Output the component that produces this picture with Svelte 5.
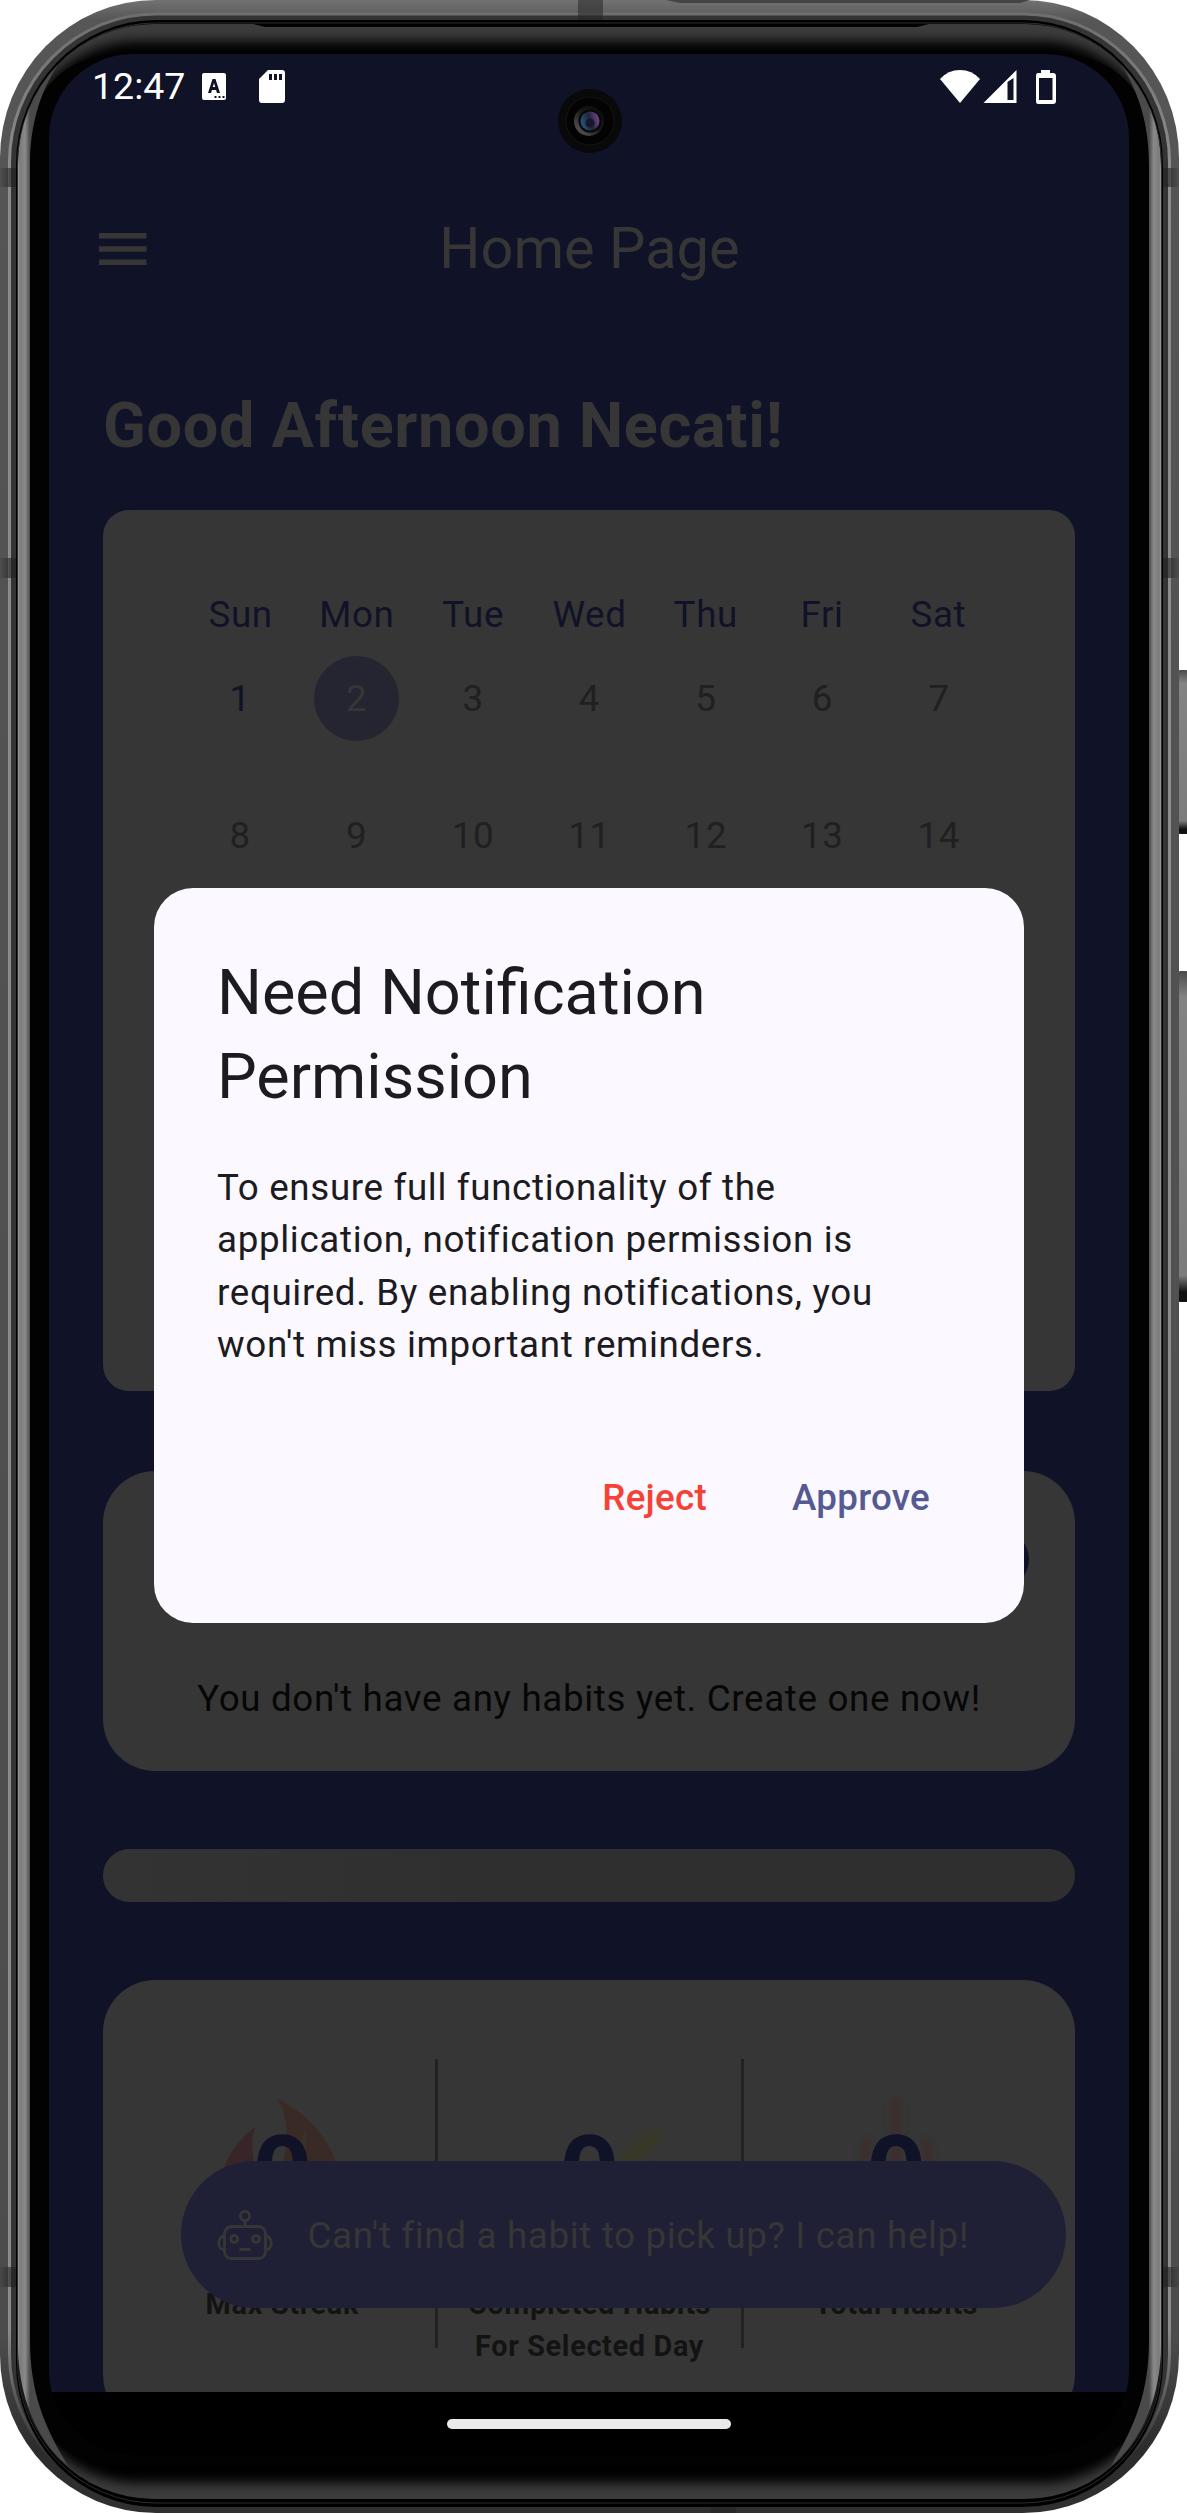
<script>
  const weekdays = ['Sun', 'Mon', 'Tue', 'Wed', 'Thu', 'Fri', 'Sat'];
  const days = Array.from({ length: 14 }, (_, i) => i + 1);
  const today = 1;
  const selected = 2;
  const stats = [
    { label: 'Max Streak', value: 0, art: 'flame' },
    { label: 'Completed Habits For Selected Day', value: 0, art: 'check' },
    { label: 'Total Habits', value: 0, art: 'tally' }
  ];
</script>

<div class="device">
  <svg class="frame" viewBox="0 0 1187 2513" aria-hidden="true">
    <defs>
      <linearGradient id="shell" x1="0" y1="0" x2="0" y2="1">
        <stop offset="0" stop-color="#727272" />
        <stop offset="0.008" stop-color="#565656" />
        <stop offset="0.05" stop-color="#555" />
        <stop offset="0.93" stop-color="#4c4c4c" />
        <stop offset="0.975" stop-color="#2c2c2c" />
        <stop offset="1" stop-color="#303030" />
      </linearGradient>
      <linearGradient id="rim" x1="0" y1="0" x2="0" y2="1">
        <stop offset="0" stop-color="#6e6e6e" />
        <stop offset="0.06" stop-color="#8c8c8c" />
        <stop offset="0.93" stop-color="#8c8c8c" />
        <stop offset="0.975" stop-color="#3c3c3c" />
        <stop offset="1" stop-color="#1c1c1c" />
      </linearGradient>
      <linearGradient id="bandL" x1="18" x2="30" y1="0" y2="0" gradientUnits="userSpaceOnUse">
        <stop offset="0" stop-color="#9a9a9a" />
        <stop offset="0.15" stop-color="#7a7a7a" />
        <stop offset="0.6" stop-color="#8a8a8a" />
        <stop offset="1" stop-color="#4a4a4a" />
      </linearGradient>
      <linearGradient id="key" x1="0" x2="0" y1="0" y2="1">
        <stop offset="0" stop-color="#4a4a4a" />
        <stop offset="0.08" stop-color="#838383" />
        <stop offset="0.92" stop-color="#7c7c7c" />
        <stop offset="0.97" stop-color="#111" />
      </linearGradient>
      <linearGradient id="markL" x1="0" x2="1" y1="0" y2="0">
        <stop offset="0" stop-color="#222" stop-opacity="0.1" /><stop offset="0.6" stop-color="#222" stop-opacity="0.6" /><stop offset="1" stop-color="#222" stop-opacity="0.7" />
      </linearGradient>
      <linearGradient id="markR" x1="1" x2="0" y1="0" y2="0">
        <stop offset="0" stop-color="#222" stop-opacity="0.1" /><stop offset="0.6" stop-color="#222" stop-opacity="0.6" /><stop offset="1" stop-color="#222" stop-opacity="0.7" />
      </linearGradient>
      <filter id="soft" x="-5%" y="-5%" width="110%" height="110%"><feGaussianBlur stdDeviation="6" /></filter>
      <clipPath id="inner"><rect x="18" y="24" width="1143" height="2475" rx="136" ry="140" /></clipPath>
    </defs>
    <rect x="1178" y="670" width="10" height="164" rx="2" fill="url(#key)" />
    <rect x="1178" y="971" width="10" height="331" rx="2" fill="url(#key)" />
    <rect width="1179" height="2513" rx="156" ry="158" fill="url(#shell)" />
    <path d="M666 0H1030L1020 3H680Z" fill="#444" />
    <rect x="9.5" y="14" width="1160" height="2488" rx="146" ry="148" fill="#343434" stroke="url(#rim)" stroke-width="3" />
    <g fill="url(#markL)">
      <rect y="168" width="16" height="19" /><rect y="558" width="16" height="20" /><rect y="2267" width="16" height="20" />
    </g>
    <g fill="url(#markR)">
      <rect x="1163" y="168" width="16" height="19" /><rect x="1163" y="558" width="16" height="20" /><rect x="1163" y="2267" width="16" height="20" />
    </g>
    <g fill="#222" opacity="0.5">
      <rect x="578" width="25" height="20" /><rect x="711" y="2504" width="25" height="9" />
    </g>
    <rect x="16" y="20" width="1147" height="2487" rx="140" ry="144" fill="#000" />
    <rect x="17.5" y="23" width="1144" height="2480" rx="138" ry="142" fill="none" stroke="#2c2c2c" />
    <g clip-path="url(#inner)">
      <rect x="18" y="24" width="1143" height="2475" fill="#3c3c3c" />
      <rect x="18" y="41" width="1143" height="2442" rx="120" fill="#020202" filter="url(#soft)" />
      <rect x="29" y="55" width="1121" height="2410" rx="85" fill="#020202" />
      <path d="M245 22L265 27H917L937 22Z" fill="#000" />
      <path d="M64 56C34 84 18 120 18 168V2345C18 2395 36 2440 68 2466C44 2426 30 2392 30 2340V165C30 125 40 88 64 56Z" fill="url(#bandL)" />
      <path d="M64 56C34 84 18 120 18 168V2345C18 2395 36 2440 68 2466C44 2426 30 2392 30 2340V165C30 125 40 88 64 56Z" transform="translate(1179 0) scale(-1 1)" fill="url(#bandL)" />
    </g>
  </svg>

  <main class="screen">
    <header class="status">
      <time>12:47</time>
      <svg class="ime" viewBox="0 0 24 27"><path fill="#fff" fill-rule="evenodd" d="M2 0H22Q24 0 24 2V25Q24 27 22 27H2Q0 27 0 25V2Q0 0 2 0ZM6 20H9L10 17H14L15 20H18L13.500 6H10.500ZM10.800 14L12 10L13.200 14ZM12.500 23V25H14.500V23ZM16.500 23V25H18.500V23ZM20.500 23V25H22.500V23Z" /></svg>
      <svg class="sd" viewBox="0 0 26 33"><path fill="#fff" fill-rule="evenodd" d="M9 0H23Q26 0 26 3V30Q26 33 23 33H3Q0 33 0 30V9ZM10 4V10H13V4ZM15 4V10H18V4ZM20 4V10H23V4Z" /></svg>
      <svg class="signals" viewBox="0 0 116 34">
        <g fill="#fff">
          <path d="M0 9Q8 0 20 0T40 9L20 33Z" />
          <path fill-rule="evenodd" d="M43.500 33L76.500 0V33ZM67.500 12V30H73.500V8Z" />
          <path fill-rule="evenodd" d="M101 0H110V3H113Q116 3 116 6V31Q116 34 113 34H98Q96 34 96 31V6Q96 3 98 3H101ZM99 8V30H112.500V8Z" />
        </g>
      </svg>
    </header>

    <div class="app">
      <nav class="appbar">
        <svg class="menu" viewBox="0 0 48 32"><path fill="#363636" d="M0 0H47.500V5.500H0ZM0 13.200H47.500V18.700H0ZM0 26.400H47.500V31.900H0Z" /></svg>
        <h1>Home Page</h1>
      </nav>

      <h2>Good Afternoon Necati!</h2>

      <section class="card calendar">
        <div class="week names">
          {#each weekdays as name}<span>{name}</span>{/each}
        </div>
        <div class="week">
          {#each days as day}
            <span class="day" class:today={day === today} class:selected={day === selected}><b>{day}</b></span>
          {/each}
        </div>
      </section>

      <section class="card habits">
        <div class="add"><i></i></div>
        <p>You don't have any habits yet. Create one now!</p>
      </section>

      <div class="shimmer"></div>

      <section class="card stats">
        {#each stats as stat}
          <article>
            <svg class="art" viewBox="0 0 160 130" aria-hidden="true">
              {#if stat.art === 'flame'}
                <path fill="#392527" d="M54 29C36 43 23 60 19 88L62 90C54 72 47 50 54 29Z" />
                <path fill="#3a2a26" d="M76 1C104 14 128 37 140 78L130 110H60C62 84 84 72 85 50C87 30 85 14 76 1Z" />
                <path fill="#38332a" d="M104 30C103 42 92 50 92 64L102 62C105 50 107 42 104 30Z" />
              {:else if stat.art === 'check'}
                <path class="haze" stroke="#393926" stroke-width="13" fill="none" d="M70 66L92 84L150 36" />
              {:else}
                <path class="haze2" stroke="#3d2d2c" stroke-width="9" d="M80 0V100M50 42V100M111 42V100" />
              {/if}
            </svg>
            <strong>{stat.value}</strong>
            <span class="label">{stat.label}</span>
          </article>
        {/each}
      </section>

      <div class="helper">
        <svg viewBox="0 0 56 50" fill="none" stroke="#363636" stroke-width="2.900">
          <circle cx="28" cy="6" r="4.600" />
          <path d="M28 11V16M22.500 39.500H33.500" />
          <rect x="7.500" y="16.500" width="41" height="32" rx="7" />
          <circle cx="17.200" cy="29" r="3.500" /><circle cx="39" cy="29" r="3.500" />
          <path d="M7 26C0 27 0 39 7 40M49 26C56 27 56 39 49 40" />
        </svg>
        <span>Can't find a habit to pick up? I can help!</span>
      </div>
    </div>

    <footer class="gesture"><i></i></footer>

    <div class="dialog" role="dialog">
      <h3>Need Notification Permission</h3>
      <p>To ensure full functionality of the application, notification permission is required. By enabling notifications, you won't miss important reminders.</p>
      <div class="actions">
        <button class="reject">Reject</button>
        <button class="approve">Approve</button>
      </div>
    </div>

    <svg class="camera" viewBox="0 0 64 64" aria-hidden="true">
      <defs>
        <linearGradient id="lens" x1="0" x2="1" y1="0.600" y2="0.300">
          <stop offset="0" stop-color="#25597a" /><stop offset="0.500" stop-color="#20243c" /><stop offset="1" stop-color="#7a4a8c" />
        </linearGradient>
        <linearGradient id="ring" x1="0" x2="1" y1="1" y2="0">
          <stop offset="0" stop-color="#666" /><stop offset="0.550" stop-color="#161616" /><stop offset="1" stop-color="#0a0a0a" />
        </linearGradient>
      </defs>
      <circle cx="32" cy="32" r="32" fill="#090909" />
      <circle cx="32" cy="32" r="24" fill="#030303" stroke="#141414" />
      <circle cx="31" cy="32" r="15" fill="url(#ring)" />
      <circle cx="32" cy="32" r="11.500" fill="#070709" />
      <circle cx="32" cy="32" r="9.500" fill="url(#lens)" />
      <circle cx="32" cy="34" r="4.500" fill="#17172a" />
    </svg>
  </main>
</div>

<style>
  :global(body) { background: #fff; }
  .device {
    position: relative;
    box-sizing: border-box;
    width: 1187px;
    height: 2513px;
    padding: 54px 58px 58px 49px;
    font-family: Roboto, sans-serif;
    font-size: 36.750px;
  }
  .frame { position: absolute; inset: 0; width: 1187px; height: 2513px; }
  .screen {
    position: relative;
    display: flex;
    flex-direction: column;
    height: 2401px;
    overflow: hidden;
    border-radius: 84px;
    background: #101228;
  }
  h1, h2, h3, p { margin: 0; font-weight: 400; }

  .status { display: flex; align-items: center; height: 65px; flex: none; padding: 0 73px 0 43px; }
  time { width: 110px; color: #fff; font-size: 37.500px; line-height: 65px; white-space: nowrap; }
  .ime { width: 24px; height: 27px; }
  .sd { width: 26px; height: 33px; margin-left: 33px; }
  .signals { width: 116px; height: 34px; margin-left: auto; }

  .app { position: relative; display: flex; flex-direction: column; height: 2273px; overflow: hidden; padding: 0 54px; }
  .appbar { display: grid; grid-template-columns: 48px 1fr 48px; align-items: center; height: 260px; flex: none; margin: 0 -5px 0 -4px; }
  .menu { width: 48px; height: 32px; }
  h1 { padding-bottom: 3px; color: #363636; font-size: 57.750px; text-align: center; }
  h2 { height: 92px; flex: none; margin-bottom: 38.500px; color: #363636; font-size: 63px; font-weight: 700; line-height: 93px; letter-spacing: 0.656px; white-space: nowrap; }

  .card { flex: none; box-sizing: border-box; background: #363636; border-radius: 52px; }
  .calendar { height: 881.500px; padding: 88.500px 78.500px 0; border-radius: 26px; }
  .week { display: grid; grid-template-columns: repeat(7, 1fr); text-align: center; letter-spacing: 0.656px; }
  .week.names { height: 32px; padding-left: 1px; line-height: 34px; color: #101228; }
  .day { display: grid; place-items: center; height: 136.700px; color: #202020; }
  .day b { display: block; box-sizing: border-box; width: 85px; height: 85px; padding-left: 1px; border-radius: 50%; font-weight: 400; line-height: 85px; }
  .today { color: #101228; }
  .selected { color: #363636; }
  .selected b { background: #252431; }

  .habits { height: 300px; margin-top: 79.500px; padding-top: 60px; }
  .add { display: flex; justify-content: flex-end; padding-right: 46.500px; margin-bottom: 84px; }
  .add i { width: 57px; height: 57px; border-radius: 50%; background: #101228; }
  .habits p { color: #060606; line-height: 53px; letter-spacing: 0.656px; text-align: center; white-space: nowrap; }

  .shimmer { height: 53px; flex: none; margin: 78.500px 0 78px; border-radius: 26.500px; background: linear-gradient(90deg, #333, #2f2f2f 40%); }

  .stats { display: grid; grid-template-columns: repeat(3, 1fr); height: 447px; padding: 79px 27px 0 25px; }
  article { position: relative; display: flex; flex-direction: column; align-items: center; box-sizing: border-box; height: 289px; padding: 62px 30px 0; }
  article:first-child { padding-left: 32px; }
  article + article { border-left: 3px solid #222; }
  .art { position: absolute; top: 39px; left: 50%; width: 160px; height: 130px; margin-left: -80px; }
  .haze { filter: blur(4px); }
  .haze2 { filter: blur(3px); }
  strong { position: relative; margin-bottom: 52px; color: #101228; font-size: 105px; font-weight: 700; line-height: 110px; }
  .label { color: #131313; font-size: 28.875px; font-weight: 700; line-height: 42px; text-align: center; letter-spacing: 0.656px; }

  .helper {
    position: absolute;
    left: 132px;
    top: 2042px;
    display: flex;
    align-items: center;
    box-sizing: border-box;
    width: 885px;
    height: 147px;
    padding-left: 35.500px;
    border-radius: 73.500px;
    background: #1f2035;
    color: #363636;
    letter-spacing: 0.656px;
    white-space: nowrap;
  }
  .helper svg { width: 56px; height: 50px; margin-right: 35px; }
  .helper span { padding-top: 1px; }

  .gesture { display: flex; flex: 1; justify-content: center; align-items: flex-start; background: #000; }
  .gesture i { width: 284px; height: 10px; margin-top: 27px; border-radius: 5px; background: #eaeaea; }

  .dialog {
    position: absolute;
    left: 105px;
    top: 833.500px;
    box-sizing: border-box;
    width: 870px;
    height: 735px;
    padding: 63px 63px 0;
    border-radius: 39px;
    background: #fbf8ff;
    color: #1c1b20;
  }
  h3 { font-size: 63px; line-height: 84px; }
  .dialog p { margin-top: 43px; line-height: 52.500px; letter-spacing: 0.656px; }
  .actions { display: flex; justify-content: flex-end; gap: 85px; margin-top: 100px; padding-right: 31px; }
  button { border: 0; padding: 0; background: none; font: 500 36.750px/52px Roboto, sans-serif; letter-spacing: 0.262px; }
  .reject { color: #f44336; }
  .approve { color: #555a92; }

  .camera { position: absolute; left: 508.500px; top: 35px; width: 64px; height: 64px; }
</style>
